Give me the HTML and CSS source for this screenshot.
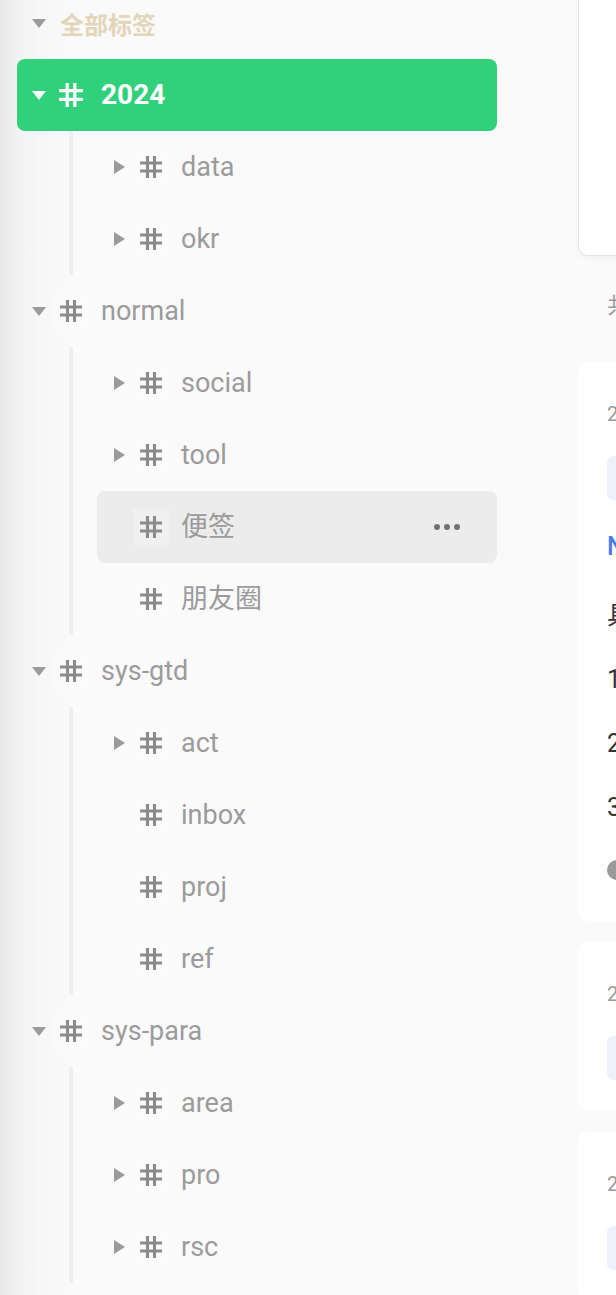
FILE: index.html
```html
<!DOCTYPE html>
<html lang="zh">
<head>
<meta charset="utf-8">
<title>标签</title>
<link rel="stylesheet" href="styles.css">
</head>
<body>
<div class="page">
  <aside class="sidebar">
    <div class="tree">
      <div class="row head">
        <span class="tri"><svg width="14" height="9" viewBox="0 0 14 9"><polygon points="0,0 14,0 7,9"/></svg></span>
        <span class="head-label">全部标签</span>
      </div>

      <div class="node">
        <div class="row l1 active">
          <span class="tri"><svg width="14" height="9" viewBox="0 0 14 9"><polygon points="0,0 14,0 7,9"/></svg></span>
          <span class="hash"><svg width="26" height="26" viewBox="0 0 24 24"><path d="M8.5 1V23M15.5 1V23M1 8H23M1 16H23"/></svg></span>
          <span class="label">2024</span>
        </div>
        <div class="children">
          <div class="row l2">
            <span class="tri"><svg width="11" height="14" viewBox="0 0 11 14"><polygon points="0,0 11,7 0,14"/></svg></span>
            <span class="hash"><svg width="24" height="24" viewBox="0 0 24 24"><path d="M8.5 1V23M15.5 1V23M1 8H23M1 16H23"/></svg></span>
            <span class="label">data</span>
          </div>
          <div class="row l2">
            <span class="tri"><svg width="11" height="14" viewBox="0 0 11 14"><polygon points="0,0 11,7 0,14"/></svg></span>
            <span class="hash"><svg width="24" height="24" viewBox="0 0 24 24"><path d="M8.5 1V23M15.5 1V23M1 8H23M1 16H23"/></svg></span>
            <span class="label">okr</span>
          </div>
        </div>
      </div>

      <div class="node">
        <div class="row l1">
          <span class="tri"><svg width="14" height="9" viewBox="0 0 14 9"><polygon points="0,0 14,0 7,9"/></svg></span>
          <span class="hash"><svg width="24" height="24" viewBox="0 0 24 24"><path d="M8.5 1V23M15.5 1V23M1 8H23M1 16H23"/></svg></span>
          <span class="label">normal</span>
        </div>
        <div class="children">
          <div class="row l2">
            <span class="tri"><svg width="11" height="14" viewBox="0 0 11 14"><polygon points="0,0 11,7 0,14"/></svg></span>
            <span class="hash"><svg width="24" height="24" viewBox="0 0 24 24"><path d="M8.5 1V23M15.5 1V23M1 8H23M1 16H23"/></svg></span>
            <span class="label">social</span>
          </div>
          <div class="row l2">
            <span class="tri"><svg width="11" height="14" viewBox="0 0 11 14"><polygon points="0,0 11,7 0,14"/></svg></span>
            <span class="hash"><svg width="24" height="24" viewBox="0 0 24 24"><path d="M8.5 1V23M15.5 1V23M1 8H23M1 16H23"/></svg></span>
            <span class="label">tool</span>
          </div>
          <div class="row l2 hover">
            <span class="tri"></span>
            <span class="hash"><svg width="24" height="24" viewBox="0 0 24 24"><path d="M8.5 1V23M15.5 1V23M1 8H23M1 16H23"/></svg></span>
            <span class="label">便签</span>
            <span class="more"><i></i><i></i><i></i></span>
          </div>
          <div class="row l2">
            <span class="tri"></span>
            <span class="hash"><svg width="24" height="24" viewBox="0 0 24 24"><path d="M8.5 1V23M15.5 1V23M1 8H23M1 16H23"/></svg></span>
            <span class="label">朋友圈</span>
          </div>
        </div>
      </div>

      <div class="node">
        <div class="row l1">
          <span class="tri"><svg width="14" height="9" viewBox="0 0 14 9"><polygon points="0,0 14,0 7,9"/></svg></span>
          <span class="hash"><svg width="24" height="24" viewBox="0 0 24 24"><path d="M8.5 1V23M15.5 1V23M1 8H23M1 16H23"/></svg></span>
          <span class="label">sys-gtd</span>
        </div>
        <div class="children">
          <div class="row l2">
            <span class="tri"><svg width="11" height="14" viewBox="0 0 11 14"><polygon points="0,0 11,7 0,14"/></svg></span>
            <span class="hash"><svg width="24" height="24" viewBox="0 0 24 24"><path d="M8.5 1V23M15.5 1V23M1 8H23M1 16H23"/></svg></span>
            <span class="label">act</span>
          </div>
          <div class="row l2">
            <span class="tri"></span>
            <span class="hash"><svg width="24" height="24" viewBox="0 0 24 24"><path d="M8.5 1V23M15.5 1V23M1 8H23M1 16H23"/></svg></span>
            <span class="label">inbox</span>
          </div>
          <div class="row l2">
            <span class="tri"></span>
            <span class="hash"><svg width="24" height="24" viewBox="0 0 24 24"><path d="M8.5 1V23M15.5 1V23M1 8H23M1 16H23"/></svg></span>
            <span class="label">proj</span>
          </div>
          <div class="row l2">
            <span class="tri"></span>
            <span class="hash"><svg width="24" height="24" viewBox="0 0 24 24"><path d="M8.5 1V23M15.5 1V23M1 8H23M1 16H23"/></svg></span>
            <span class="label">ref</span>
          </div>
        </div>
      </div>

      <div class="node">
        <div class="row l1">
          <span class="tri"><svg width="14" height="9" viewBox="0 0 14 9"><polygon points="0,0 14,0 7,9"/></svg></span>
          <span class="hash"><svg width="24" height="24" viewBox="0 0 24 24"><path d="M8.5 1V23M15.5 1V23M1 8H23M1 16H23"/></svg></span>
          <span class="label">sys-para</span>
        </div>
        <div class="children">
          <div class="row l2">
            <span class="tri"><svg width="11" height="14" viewBox="0 0 11 14"><polygon points="0,0 11,7 0,14"/></svg></span>
            <span class="hash"><svg width="24" height="24" viewBox="0 0 24 24"><path d="M8.5 1V23M15.5 1V23M1 8H23M1 16H23"/></svg></span>
            <span class="label">area</span>
          </div>
          <div class="row l2">
            <span class="tri"><svg width="11" height="14" viewBox="0 0 11 14"><polygon points="0,0 11,7 0,14"/></svg></span>
            <span class="hash"><svg width="24" height="24" viewBox="0 0 24 24"><path d="M8.5 1V23M15.5 1V23M1 8H23M1 16H23"/></svg></span>
            <span class="label">pro</span>
          </div>
          <div class="row l2">
            <span class="tri"><svg width="11" height="14" viewBox="0 0 11 14"><polygon points="0,0 11,7 0,14"/></svg></span>
            <span class="hash"><svg width="24" height="24" viewBox="0 0 24 24"><path d="M8.5 1V23M15.5 1V23M1 8H23M1 16H23"/></svg></span>
            <span class="label">rsc</span>
          </div>
        </div>
      </div>
    </div>
  </aside>

  <main class="content">
    <section class="card editor"></section>
    <div class="count">共 12 条笔记</div>
    <article class="card memo">
      <div class="date">2024-03-18 21:45:12</div>
      <div class="tag">#2024/okr</div>
      <div class="line link">Notion 周报模板</div>
      <div class="line title">具体行动：</div>
      <div class="line">1. 整理本周任务清单</div>
      <div class="line">2. 复盘上周目标进度</div>
      <div class="line">3. 更新季度计划</div>
      <div class="foot"><span class="dot-icon"></span></div>
    </article>
    <article class="card memo">
      <div class="date">2024-03-12 09:30:41</div>
      <div class="tag">#2024/data</div>
    </article>
    <article class="card memo">
      <div class="date">2024-03-05 18:02:07</div>
      <div class="tag">#normal/便签</div>
    </article>
  </main>
</div>
</body>
</html>
```

FILE: styles.css
```css
html, body {
  margin: 0;
  padding: 0;
}

body {
  width: 616px;
  height: 1295px;
  overflow: hidden;
  background: linear-gradient(to right, #e8e8e8 0, #f2f2f2 18px, #f7f7f7 40px, #fafafa 70px, #fafafa 100%);
  font-family: Roboto, "Noto Sans CJK SC", sans-serif;
}

.page {
  display: flex;
  align-items: flex-start;
}

.sidebar {
  flex: 0 0 561px;
  padding-left: 17px;
}

.tree {
  width: 480px;
  margin-top: -13px;
}

.row {
  height: 72px;
  display: flex;
  align-items: center;
  padding-left: 15px;
  box-sizing: border-box;
  border-radius: 8px;
  color: #9b9b9b;
}

.tri {
  flex: 0 0 14px;
  height: 14px;
  display: flex;
  align-items: center;
  justify-content: center;
}

.tri svg {
  fill: #9a9a9a;
  display: block;
}

.head .tri {
  margin-right: 14px;
}

.head-label {
  font-size: 24px;
  font-weight: 700;
  color: #e3d5b8;
  font-family: "Noto Sans CJK SC", sans-serif;
}

.hash {
  flex: 0 0 36px;
  height: 36px;
  margin-left: 7px;
  margin-right: 12px;
  display: flex;
  align-items: center;
  justify-content: center;
  background: rgba(255, 255, 255, 0.22);
}

.hash svg {
  display: block;
  fill: none;
  stroke: #8c8c8c;
  stroke-width: 3.1;
}

.label {
  font-size: 27px;
  line-height: 36px;
  color: #9b9b9b;
  white-space: nowrap;
}

.active {
  background: #31d07b;
}

.active .tri svg {
  fill: #ffffff;
}

.active .hash {
  background: transparent;
}

.active .hash svg {
  stroke: #ffffff;
  stroke-width: 3;
}

.active .label {
  color: #ffffff;
  font-weight: 700;
  font-size: 28px;
}

.children {
  margin-left: 52px;
  border-left: 4px solid #efefef;
  padding-left: 24px;
}

.hover {
  background: #ececec;
}

.more {
  margin-left: auto;
  margin-right: 37px;
  display: flex;
  gap: 4px;
}

.more i {
  width: 6px;
  height: 6px;
  border-radius: 50%;
  background: #737373;
  display: block;
}

/* right content */
.content {
  flex: 0 0 420px;
  display: flex;
  flex-direction: column;
}

.card {
  background: #ffffff;
  border-radius: 10px;
  padding-left: 29px;
  box-sizing: border-box;
}

.editor {
  height: 268px;
  margin-top: -12px;
  border: 1px solid #e3e3e3;
  box-shadow: 0 2px 6px rgba(0, 0, 0, 0.04);
}

.count {
  padding: 36px 0 42px 29px;
  font-size: 22px;
  line-height: 28px;
  color: #9a9a9a;
  white-space: nowrap;
}

.memo {
  padding-top: 38px;
  padding-bottom: 31px;
  margin-bottom: 21px;
}

.date {
  font-size: 20px;
  line-height: 28px;
  color: #9a9a9a;
  white-space: nowrap;
}

.tag {
  margin-top: 28px;
  height: 44px;
  width: 180px;
  border-radius: 6px;
  background: #eef1fc;
  color: #eef1fc;
  font-size: 20px;
  line-height: 44px;
  padding-left: 14px;
  box-sizing: border-box;
}

.line {
  font-size: 25px;
  line-height: 64px;
  color: #333333;
  white-space: nowrap;
}

.link {
  margin-top: 15px;
  color: #4a7bf0;
  font-weight: 500;
}

.title {
  margin-top: 5px;
}

.foot {
  height: 40px;
  margin-top: 10px;
  display: flex;
  align-items: center;
}

.dot-icon {
  width: 20px;
  height: 20px;
  border-radius: 50%;
  background: #9a9a9a;
  display: block;
}
```
